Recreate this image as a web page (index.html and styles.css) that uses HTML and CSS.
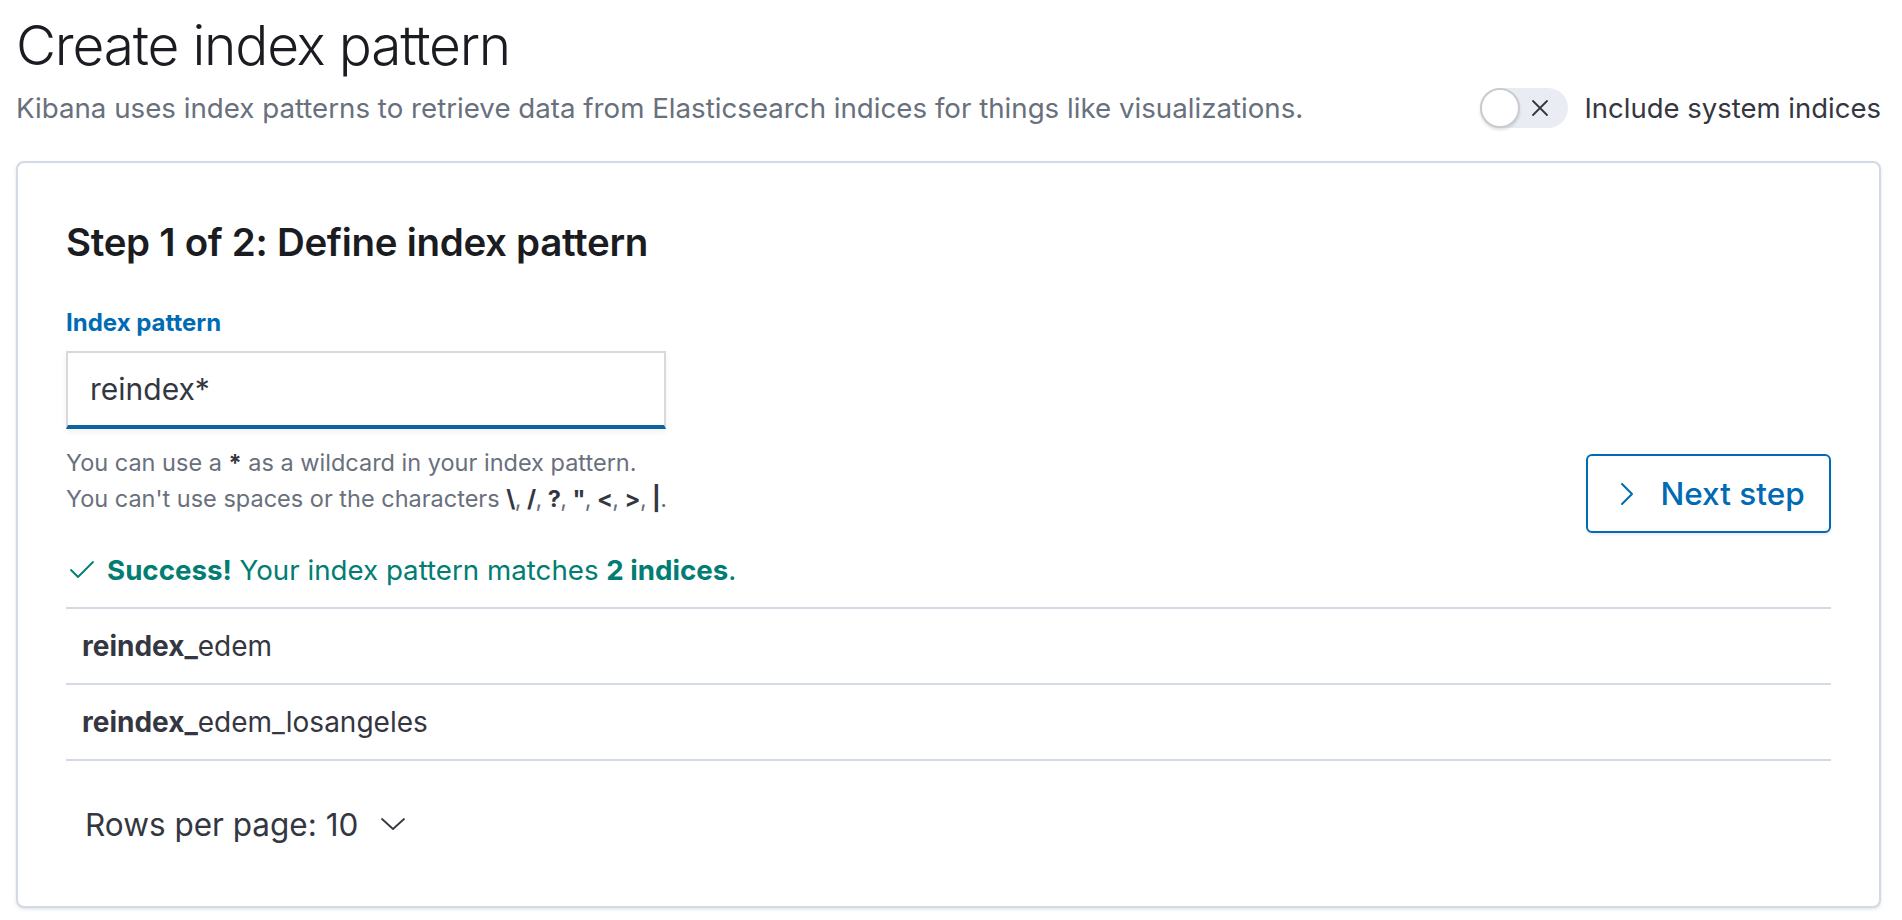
FILE: index.html
```html
<!DOCTYPE html>
<html lang="en">
<head>
<meta charset="utf-8">
<title>Create index pattern</title>
<link rel="stylesheet" href="styles.css">
</head>
<body>
<div class="page">
  <h1 class="page-title">Create index pattern</h1>
  <div class="subheader">
    <p class="subtitle">Kibana uses index patterns to retrieve data from Elasticsearch indices for things like visualizations.</p>
    <label class="switch">
      <span class="switch-track">
        <span class="switch-thumb"></span>
        <svg class="switch-x" width="20" height="20" viewBox="0 0 20 20"><path d="M3 3 L17 17 M17 3 L3 17" stroke="#343741" stroke-width="1.8" fill="none" stroke-linecap="round"/></svg>
      </span>
      <span class="switch-label">Include system indices</span>
    </label>
  </div>

  <section class="panel">
    <h2 class="step-title">Step 1 of 2: Define index pattern</h2>
    <div class="header-row">
      <div class="form">
        <div class="field-label">Index pattern</div>
        <div class="input">reindex*</div>
        <div class="help">
          <div>You can use a <b>*</b> as a wildcard in your index pattern.</div>
          <div>You can't use spaces or the characters <span class="chars"><b>\</b>, <b>/</b>, <b>?</b>, <b>"</b>, <b>&lt;</b>, <b>&gt;</b>, <b>|</b>.</span></div>
        </div>
      </div>
      <button class="next-btn">
        <svg width="16" height="24" viewBox="0 0 16 24"><path d="M3 2 L13 12 L3 22" stroke="#006BB4" stroke-width="2" fill="none" stroke-linecap="round" stroke-linejoin="round"/></svg>
        <span>Next step</span>
      </button>
    </div>

    <div class="success">
      <svg width="26" height="20" viewBox="0 0 26 20"><path d="M2 10 L9 17 L24 2" stroke="#017D73" stroke-width="1.8" fill="none" stroke-linecap="round" stroke-linejoin="round"/></svg>
      <span><b>Success!</b> Your index pattern matches <b>2 indices</b>.</span>
    </div>

    <div class="table">
      <div class="row"><b>reindex_</b>edem</div>
      <div class="row"><b>reindex_</b>edem_losangeles</div>
    </div>

    <div class="pagination">
      <span>Rows per page: 10</span>
      <svg width="26" height="16" viewBox="0 0 26 16"><path d="M2 3 L13 13 L24 3" stroke="#343741" stroke-width="1.8" fill="none" stroke-linecap="round" stroke-linejoin="round"/></svg>
    </div>
  </section>
</div>
</body>
</html>
```

FILE: styles.css
```css
* { box-sizing: border-box; }
html, body {
  margin: 0;
  padding: 0;
  background: #ffffff;
}
body {
  font-family: Inter, "Noto Sans", "Liberation Sans", sans-serif;
  color: #343741;
}
.page {
  padding: 11px 21px 6px 16px;
}
.page-title {
  margin: 0;
  font-size: 55px;
  line-height: 68px;
  font-weight: 300;
  color: #1a1c21;
  letter-spacing: -1.2px;
}
.subheader {
  display: flex;
  justify-content: space-between;
  align-items: center;
  margin-top: 9px;
}
.subtitle {
  margin: 0;
  font-size: 27.7px;
  line-height: 34px;
  color: #69707d;
}
.switch {
  display: flex;
  align-items: center;
  gap: 16px;
}
.switch-track {
  position: relative;
  display: block;
  width: 88px;
  height: 40px;
  border-radius: 20px;
  background: #e9edf3;
}
.switch-thumb {
  position: absolute;
  left: 0;
  top: 0;
  width: 40px;
  height: 40px;
  border-radius: 50%;
  background: #fff;
  border: 2px solid #c9ccd1;
  box-shadow: 0 2px 3px rgba(0,0,0,0.12);
}
.switch-x {
  position: absolute;
  left: 50px;
  top: 10px;
}
.switch-label {
  font-size: 27.5px;
  line-height: 34px;
  color: #343741;
}
.panel {
  margin-top: 33px;
  border: 2px solid #d3dae6;
  border-radius: 8px;
  background: #fff;
  box-shadow: 0 2px 4px rgba(152,162,179,0.15), 0 1px 2px rgba(152,162,179,0.15);
  padding: 56px 48px 44px 48px;
}
.step-title {
  margin: 0;
  font-size: 38.5px;
  line-height: 46px;
  font-weight: 600;
  color: #1a1c21;
  letter-spacing: -0.3px;
}
.header-row {
  display: flex;
  justify-content: space-between;
  align-items: flex-start;
  margin-top: 43px;
}
.field-label {
  font-size: 24px;
  line-height: 29px;
  font-weight: 700;
  color: #006bb4;
}
.input {
  margin-top: 14px;
  width: 600px;
  height: 78px;
  border: 2px solid #d9d9d9;
  border-bottom: 4px solid #0b64a0;
  background: #fff;
  box-shadow: 0 3px 6px rgba(0,0,0,0.06);
  padding: 0 22px;
  display: flex;
  align-items: center;
  font-size: 30px;
  color: #343741;
}
.help {
  margin-top: 16px;
  font-size: 23.5px;
  line-height: 36px;
  color: #69707d;
}
.help b {
  color: #343741;
  font-weight: 700;
}
.chars {
  letter-spacing: -0.6px;
}
.next-btn {
  margin-top: 146px;
  width: 245px;
  height: 79px;
  border: 2px solid #006bb4;
  border-radius: 6px;
  background: #fff;
  box-shadow: 0 2px 3px rgba(0,0,0,0.08);
  display: flex;
  align-items: center;
  justify-content: center;
  gap: 25px;
  font-family: Inter, "Noto Sans", sans-serif;
  font-size: 31.5px;
  font-weight: 500;
  color: #006bb4;
  padding: 0 0 0 7px;
  cursor: pointer;
}
.success {
  margin-top: 20px;
  display: flex;
  align-items: center;
  gap: 12px;
  padding-left: 3px;
  font-size: 27.7px;
  line-height: 34px;
  color: #017d73;
}
.success b { font-weight: 700; }
.table {
  margin-top: 20px;
  border-top: 2px solid #d3dae6;
}
.row {
  height: 76px;
  border-bottom: 2px solid #d3dae6;
  display: flex;
  align-items: center;
  padding-left: 16px;
  font-size: 28px;
  color: #343741;
}
.row b { font-weight: 700; }
.pagination {
  margin-top: 25px;
  height: 76px;
  display: flex;
  align-items: center;
  gap: 22px;
  padding-left: 19px;
  font-size: 31.5px;
  color: #343741;
}
```
